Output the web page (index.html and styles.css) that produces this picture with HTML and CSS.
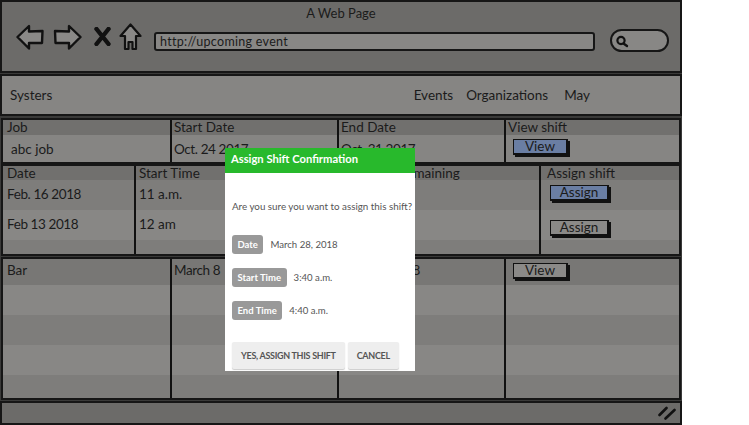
FILE: index.html
```html
<!DOCTYPE html>
<html lang="en">
<head>
    <meta charset="UTF-8">
    <title>Assign Shift</title>
    <link rel="stylesheet" href="styles.css">
</head>
<body>
    <div class="browser">
        <div class="chrome">
            <div class="chrome-title">A Web Page</div>
            <div class="toolbar">
                <svg class="icon-back" width="28" height="26" viewBox="0 0 28 26"><path d="M1.5 13 L13 2 L13 7.5 L26.5 7 L26 19 L13 19 L13 24.5 Z" fill="#8a8987" stroke="#111" stroke-width="2.4" stroke-linejoin="round"/></svg>
                <svg class="icon-forward" width="29" height="26" viewBox="0 0 29 26"><path d="M27.5 13 L16 2 L16 7.5 L2 7 L2.5 19 L16 19 L16 24.5 Z" fill="#8a8987" stroke="#111" stroke-width="2.4" stroke-linejoin="round"/></svg>
                <svg class="icon-stop" width="17" height="19" viewBox="0 0 17 19"><path d="M2.5 2 L14.5 17 M14.5 2 L2.5 17" fill="none" stroke="#111" stroke-width="4.4" stroke-linecap="round"/></svg>
                <svg class="icon-home" width="23" height="28" viewBox="0 0 23 28"><path d="M11.5 1.5 L21.5 13 L17 13 L17 26 L13.5 26 L13.5 19 L9.5 19 L9.5 26 L6 26 L6 13 L1.5 13 Z" fill="#8a8987" stroke="#111" stroke-width="2.2" stroke-linejoin="round"/></svg>
                <div class="url-field">http://upcoming event</div>
                <div class="search-field">
                    <svg width="14" height="14" viewBox="0 0 14 14"><circle cx="6" cy="6.5" r="3.6" fill="none" stroke="#111" stroke-width="2.2"/><path d="M8.5 9.5 L12 12" stroke="#111" stroke-width="2.4" stroke-linecap="round"/></svg>
                </div>
            </div>
        </div>

        <nav class="navbar">
            <span class="brand">Systers</span>
            <span class="nav-links">
                <span>Events</span>
                <span>Organizations</span>
                <span class="nav-may">May</span>
            </span>
        </nav>

        <section class="grid grid-job">
            <div class="cell head">Job</div>
            <div class="cell head">Start Date</div>
            <div class="cell head">End Date</div>
            <div class="cell head">View shift</div>
            <div class="cell body-job indent">abc job</div>
            <div class="cell body-job date">Oct. 24 2017</div>
            <div class="cell body-job date">Oct. 31 2017</div>
            <div class="cell body-job has-btn"><span class="sk-btn selected btn-view">View</span></div>
        </section>

        <section class="grid grid-shift">
            <div class="cell head">Date</div>
            <div class="cell head">Start Time</div>
            <div class="cell head remaining">Positions Remaining</div>
            <div class="cell head assign-col">Assign shift</div>

            <div class="cell row-a date">Feb. 16 2018</div>
            <div class="cell row-a">11 a.m.</div>
            <div class="cell row-a"></div>
            <div class="cell row-a assign-col"><span class="sk-btn selected btn-assign">Assign</span></div>

            <div class="cell row-b date">Feb 13 2018</div>
            <div class="cell row-b">12 am</div>
            <div class="cell row-b"></div>
            <div class="cell row-b assign-col"><span class="sk-btn btn-assign">Assign</span></div>

            <div class="cell row-a end"></div>
            <div class="cell row-a end"></div>
            <div class="cell row-a end"></div>
            <div class="cell row-a end assign-col"></div>
        </section>

        <section class="grid grid-event">
            <div class="cell tall">Bar</div>
            <div class="cell tall date">March 8</div>
            <div class="cell tall date">March 8 2018</div>
            <div class="cell tall has-btn"><span class="sk-btn btn-view">View</span></div>

            <div class="cell row-b"></div><div class="cell row-b"></div><div class="cell row-b"></div><div class="cell row-b"></div>
            <div class="cell row-a"></div><div class="cell row-a"></div><div class="cell row-a"></div><div class="cell row-a"></div>
            <div class="cell row-b"></div><div class="cell row-b"></div><div class="cell row-b"></div><div class="cell row-b"></div>
            <div class="cell row-a last"></div><div class="cell row-a last"></div><div class="cell row-a last"></div><div class="cell row-a last"></div>
        </section>

        <div class="statusbar">
            <svg width="19" height="14" viewBox="0 0 19 14"><path d="M1.5 9 L8.5 2 M7.5 12.5 L16.5 4" fill="none" stroke="#111" stroke-width="2.6" stroke-linecap="round"/></svg>
        </div>
    </div>

    <div class="modal">
        <div class="modal-header">Assign Shift Confirmation</div>
        <div class="modal-body">
            <p class="question">Are you sure you want to assign this shift?</p>
            <div class="detail"><span class="badge">Date</span><span>March 28, 2018</span></div>
            <div class="detail"><span class="badge">Start Time</span><span>3:40 a.m.</span></div>
            <div class="detail"><span class="badge">End Time</span><span>4:40 a.m.</span></div>
            <div class="modal-actions">
                <button type="button">Yes, assign this shift</button>
                <button type="button">Cancel</button>
            </div>
        </div>
    </div>
</body>
</html>
```

FILE: styles.css
```css
* {
    box-sizing: border-box;
}

body {
    margin: 0;
    background: #fff;
    font-family: Lato, "Open Sans", sans-serif;
}

.browser {
    width: 682px;
    height: 425px;
    display: flex;
    flex-direction: column;
    background: #3a3a39;
    color: #1b1b1b;
    font-size: 13.5px;
}

.browser > * {
    flex-shrink: 0;
}

/* window top */
.chrome {
    height: 73px;
    background: #6c6b69;
    border: 2px solid #161616;
}

.chrome-title {
    text-align: center;
    font-size: 13px;
    line-height: 15px;
    padding-top: 4px;
}

.toolbar {
    display: flex;
    align-items: flex-start;
    padding: 3px 0 0 14px;
}

.icon-forward {
    margin-left: 9px;
}

.icon-stop {
    margin: 3px 0 0 12px;
}

.icon-home {
    margin: -1px 0 0 8px;
}

.url-field {
    width: 441px;
    height: 19px;
    margin: 8px 0 0 12px;
    padding-left: 4px;
    background: #888785;
    border: 2px solid #161616;
    border-radius: 3px;
    line-height: 15px;
    font-size: 12.5px;
    letter-spacing: 0.3px;
}

.search-field {
    width: 59px;
    height: 23px;
    margin: 5px 0 0 15px;
    padding: 3px 0 0 3px;
    background: #888785;
    border: 2px solid #161616;
    border-radius: 12px;
}

.navbar {
    height: 42px;
    margin-top: 1px;
    padding: 0 8px;
    display: flex;
    align-items: center;
    justify-content: space-between;
    background: #868583;
    border: 2px solid #161616;
}

.nav-links {
    display: flex;
    gap: 13px;
    padding-right: 82px;
}

.nav-may {
    margin-left: 3px;
}

/* tables */
.grid {
    display: grid;
    width: 680px;
    margin: 0 1px;
    column-gap: 2px;
    background: #111;
    border: 2px solid #161616;
}

.grid-job,
.grid-event {
    grid-template-columns: 167px 165px 165px 1fr;
}

.grid-job {
    margin-top: 2px;
}

.grid-shift {
    grid-template-columns: 131px 201px 200px 1fr;
}

.grid-event {
    margin-top: 1px;
}

.cell {
    padding-left: 2px;
    background: #868583;
    line-height: 15px;
}

.cell:nth-child(4n + 1) {
    padding-left: 4px;
}

.grid-shift .cell:nth-child(4n + 2) {
    padding-left: 3px;
}

.head {
    height: 15px;
    background: #71706e;
}

.grid-shift .head {
    height: 14px;
    line-height: 14px;
}

.body-job {
    height: 27px;
    padding-top: 7px;
}

.cell.indent {
    padding-left: 8px;
}

.date {
    letter-spacing: -0.4px;
}

.has-btn {
    padding-top: 4px;
}

.row-a,
.row-b {
    height: 30px;
    padding-top: 7px;
}

.row-a {
    background: #7e7d7b;
}

.row-b {
    background: #888785;
}

.end {
    height: 14px;
    padding-top: 0;
}

.tall {
    height: 26px;
    padding-top: 4px;
    background: #787775;
}

.last {
    height: 23px;
}

.remaining {
    white-space: nowrap;
}

.assign-col {
    padding-left: 6px;
}

.grid-shift .row-a.assign-col {
    padding: 5px 0 0 9px;
}

.grid-shift .row-b.assign-col {
    padding: 10px 0 0 9px;
}

/* sketchy buttons */
.sk-btn {
    display: block;
    height: 16px;
    background: #8b8a88;
    border: 1px solid #111;
    border-right-width: 2px;
    border-bottom-width: 2px;
    box-shadow: 2px 2px 0 #111;
    line-height: 13px;
    text-align: center;
}

.sk-btn.selected {
    background: #6a7ea3;
}

.btn-view {
    width: 55px;
    margin-left: 5px;
}

.btn-assign {
    width: 59px;
}

.statusbar {
    height: 24px;
    margin-top: 1px;
    padding: 3px 3px 0 0;
    display: flex;
    justify-content: flex-end;
    background: #6c6b69;
    border: 2px solid #161616;
}

/* confirmation dialog */
.modal {
    position: absolute;
    left: 225px;
    top: 148px;
    width: 190px;
    height: 223px;
    background: #fff;
    color: #555;
}

.modal-header {
    height: 25px;
    padding-left: 6px;
    background: #28b92c;
    color: #fff;
    font-size: 11.2px;
    font-weight: 700;
    line-height: 22px;
    white-space: nowrap;
}

.modal-body {
    padding: 26px 0 0 7px;
    font-size: 9.6px;
}

.question {
    margin: 0 0 22px;
    font-size: 9.8px;
    line-height: 14px;
    white-space: nowrap;
}

.detail {
    display: flex;
    align-items: center;
    gap: 7px;
    margin-bottom: 14px;
}

.badge {
    padding: 0 5.5px;
    background: #999;
    border-radius: 3px;
    color: #fff;
    font-size: 9.5px;
    font-weight: 700;
    line-height: 19px;
}

.modal-actions {
    display: flex;
    gap: 3px;
    margin-top: 22px;
}

.modal-actions button {
    height: 27px;
    padding: 0 9px;
    background: #eee;
    border: none;
    border-radius: 2px;
    box-shadow: 0 1px 1px #ccc;
    color: #555;
    font-family: inherit;
    font-size: 9px;
    font-weight: 700;
    letter-spacing: -0.3px;
    text-transform: uppercase;
    white-space: nowrap;
}
```
